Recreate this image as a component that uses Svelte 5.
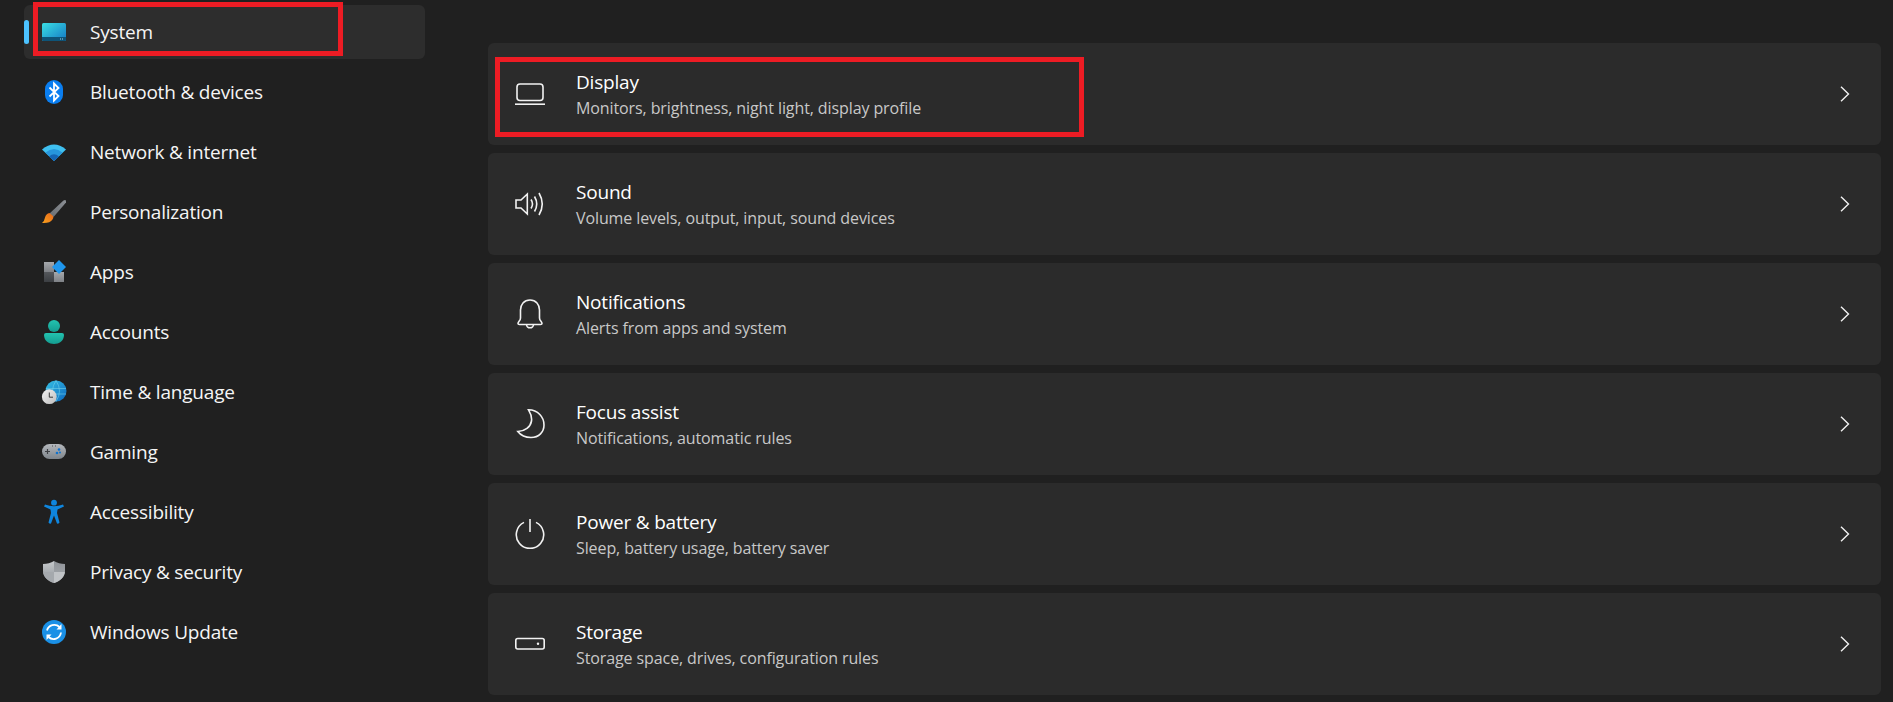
<script>
  const nav = [
    { icon: 'system', label: 'System', active: true },
    { icon: 'bluetooth', label: 'Bluetooth & devices' },
    { icon: 'network', label: 'Network & internet' },
    { icon: 'brush', label: 'Personalization' },
    { icon: 'apps', label: 'Apps' },
    { icon: 'accounts', label: 'Accounts' },
    { icon: 'time', label: 'Time & language' },
    { icon: 'gaming', label: 'Gaming' },
    { icon: 'access', label: 'Accessibility' },
    { icon: 'privacy', label: 'Privacy & security' },
    { icon: 'update', label: 'Windows Update' }
  ];

  const cards = [
    { icon: 'display', title: 'Display', sub: 'Monitors, brightness, night light, display profile', marked: true },
    { icon: 'sound', title: 'Sound', sub: 'Volume levels, output, input, sound devices' },
    { icon: 'bell', title: 'Notifications', sub: 'Alerts from apps and system' },
    { icon: 'moon', title: 'Focus assist', sub: 'Notifications, automatic rules' },
    { icon: 'power', title: 'Power & battery', sub: 'Sleep, battery usage, battery saver' },
    { icon: 'storage', title: 'Storage', sub: 'Storage space, drives, configuration rules' }
  ];
</script>

<div class="page">
  <svg class="defs" width="0" height="0">
    <defs>
      <linearGradient id="g-system" x1="0" y1="0" x2="1" y2="1">
        <stop offset="0" stop-color="#3adfe4" />
        <stop offset="1" stop-color="#1478c4" />
      </linearGradient>
      <linearGradient id="g-handle" x1="1" y1="0" x2="0" y2="1">
        <stop offset="0" stop-color="#8b8f94" />
        <stop offset="1" stop-color="#6a6e73" />
      </linearGradient>
      <linearGradient id="g-tip" x1="0" y1="1" x2="1" y2="0">
        <stop offset="0" stop-color="#f9a21c" />
        <stop offset="1" stop-color="#e8681c" />
      </linearGradient>
      <linearGradient id="g-account" x1="0" y1="0" x2="0" y2="1">
        <stop offset="0" stop-color="#23c3b0" />
        <stop offset="1" stop-color="#149c90" />
      </linearGradient>
      <linearGradient id="g-globe" x1="0" y1="0" x2="1" y2="1">
        <stop offset="0" stop-color="#36c0e4" />
        <stop offset="1" stop-color="#0c68c0" />
      </linearGradient>
      <linearGradient id="g-clock" x1="0" y1="0" x2="1" y2="1">
        <stop offset="0" stop-color="#f2f2f2" />
        <stop offset="1" stop-color="#bdbdbd" />
      </linearGradient>
      <linearGradient id="g-pad" x1="0" y1="0" x2="0" y2="1">
        <stop offset="0" stop-color="#b4b8bd" />
        <stop offset="1" stop-color="#7f858b" />
      </linearGradient>
      <linearGradient id="g-shield-l" x1="0" y1="0" x2="0" y2="1">
        <stop offset="0" stop-color="#c6c9cc" />
        <stop offset="1" stop-color="#8e9297" />
      </linearGradient>
      <linearGradient id="g-shield-r" x1="0" y1="0" x2="0" y2="1">
        <stop offset="0" stop-color="#8f9398" />
        <stop offset="1" stop-color="#a9adb1" />
      </linearGradient>
      <linearGradient id="g-apps" x1="0" y1="0" x2="0" y2="1">
        <stop offset="0" stop-color="#a5a8ac" />
        <stop offset="1" stop-color="#7e8186" />
      </linearGradient>
      <linearGradient id="g-apps-dark" x1="0" y1="0" x2="0" y2="1">
        <stop offset="0" stop-color="#55585c" />
        <stop offset="1" stop-color="#3c3f43" />
      </linearGradient>
    </defs>
  </svg>

  <nav class="sidebar">
    {#each nav as item}
      <div class="nav-item" class:active={item.active}>
        {#if item.active}
          <span class="indicator"></span>
          <span class="mark mark-nav"></span>
        {/if}
        <svg class="nav-icon" viewBox="0 0 30 30" width="30" height="30">
          {#if item.icon === 'system'}
            <rect x="3" y="6" width="24" height="18" rx="1.5" fill="url(#g-system)" />
            <path d="M3 20h24v2.5a1.5 1.5 0 0 1-1.5 1.5h-21A1.5 1.5 0 0 1 3 22.5z" fill="#0e5478" />
            <rect x="21" y="21.5" width="1" height="1" fill="#9fd4e8" />
            <rect x="23" y="21.5" width="1" height="1" fill="#9fd4e8" />
          {:else if item.icon === 'bluetooth'}
            <rect x="6" y="3" width="18" height="24" rx="9" fill="#0a7ef0" />
            <path d="M10.5 10.5 19.5 19 15 23.5V6.5L19.5 11 10.5 19.5" fill="none" stroke="#fff" stroke-width="1.8" />
          {:else if item.icon === 'network'}
            <path d="M3 12.5Q15 2.5 27 12.5L15 24Z" fill="#3fc0f0" />
            <path d="M6.5 15.5Q15 8.5 23.5 15.5L15 24Z" fill="#2796dc" />
            <path d="M10 19.5Q15 15 20 19.5L15 24Z" fill="#1565b4" />
          {:else if item.icon === 'brush'}
            <path d="M24.5 3.5Q27.5 2 27 5.5L14.5 20 10.5 16.5Z" fill="url(#g-handle)" />
            <path d="M10.5 16Q7 16.5 6 20.5 5.5 24 3 26 11 26.5 13.5 22.5 15 20.5 14 19Z" fill="url(#g-tip)" />
          {:else if item.icon === 'apps'}
            <rect x="5" y="5" width="10" height="10" fill="url(#g-apps)" />
            <rect x="5" y="15" width="10" height="10" fill="url(#g-apps-dark)" />
            <rect x="15" y="15" width="10" height="10" fill="url(#g-apps)" />
            <path d="M20 3l7 7-7 7-7-7z" fill="#1f97ee" />
          {:else if item.icon === 'accounts'}
            <circle cx="15" cy="9" r="6" fill="url(#g-account)" />
            <path d="M5 18a2 2 0 0 1 2-2h16a2 2 0 0 1 2 2c0 6-5 9-10 9S5 24 5 18z" fill="url(#g-account)" />
          {:else if item.icon === 'time'}
            <circle cx="17" cy="14" r="10.5" fill="url(#g-globe)" />
            <path d="M6.8 11.5H27M7 17H27M17 3.5Q10 14 17 24.500M17 3.500Q24 14 17 24.500" fill="none" stroke="#6fd0ea" stroke-width="0.6" />
            <circle cx="10.300" cy="19.700" r="7.400" fill="url(#g-clock)" />
            <path d="M10.300 15.500V20.200H14" fill="none" stroke="#3a3a3a" stroke-width="1" />
          {:else if item.icon === 'gaming'}
            <rect x="3" y="7" width="24" height="15" rx="7.500" fill="url(#g-pad)" />
            <path d="M6 14.500H11M8.500 12V17" stroke="#3d4044" stroke-width="1.200" />
            <circle cx="20" cy="12.500" r="1.300" fill="#1172cc" />
            <circle cx="18" cy="16" r="1.300" fill="#1172cc" />
            <circle cx="21" cy="15.500" r="1" fill="#1172cc" />
            <rect x="13" y="8.500" width="1" height="1" fill="#4a4d51" />
            <rect x="16" y="8.500" width="1" height="1" fill="#4a4d51" />
          {:else if item.icon === 'access'}
            <circle cx="15" cy="5.700" r="2.900" fill="#0f86de" />
            <path d="M5 9.500 6 7.500Q15 11 24 7.500L25 9.500 18.500 12.500 18 16 20.500 25.500Q20 27 18 26.500L15 18.500 12 26.500Q10 27 9.500 25.500L12 16 11.500 12.500Z" fill="#0f86de" />
          {:else if item.icon === 'privacy'}
            <path d="M15 4C12 6 8 7 4 7V14C4 20 9 24 15 26Z" fill="url(#g-shield-l)" />
            <path d="M15 4C18 6 22 7 26 7V14C26 20 21 24 15 26Z" fill="url(#g-shield-r)" />
            <path d="M15 15H4.100C4.700 20 9 24 15 26Z" fill="#a5a9ad" />
            <path d="M15 15H25.900C25.300 20 21 24 15 26Z" fill="#c0c3c6" />
          {:else if item.icon === 'update'}
            <circle cx="15" cy="15" r="12" fill="#1a90e6" />
            <path d="M8 13.500A7.500 7.500 0 0 1 20.500 10" fill="none" stroke="#fff" stroke-width="1.800" />
            <path d="M22 15.500A7.500 7.500 0 0 1 9.500 20" fill="none" stroke="#fff" stroke-width="1.800" />
            <path d="M22.500 7V12.500H17.500Z" fill="#fff" />
            <path d="M7.500 23V17.500H12.500Z" fill="#fff" />
          {/if}
        </svg>
        <span class="nav-label">{item.label}</span>
      </div>
    {/each}
  </nav>

  <main class="content">
    {#each cards as card}
      <div class="card">
        {#if card.marked}
          <span class="mark mark-card"></span>
        {/if}
        <svg class="card-icon" viewBox="0 0 30 30" width="30" height="30" fill="none" stroke="#f2f2f2" stroke-width="1.600">
          {#if card.icon === 'display'}
            <rect x="2" y="5" width="26" height="16.500" rx="3" />
            <path d="M0 25.200H30" />
          {:else if card.icon === 'sound'}
            <path d="M1 11H6L12.300 5V25L6 19H1Z" />
            <path d="M16 10.500Q19 15 16 19.500M19.500 7.500Q24 15 19.500 22.500M24 4Q30.500 15 24 26" />
          {:else if card.icon === 'bell'}
            <path d="M15 1C9 1 5.500 5.500 5.500 11V19C5.500 22 3 22.500 3 24.500Q3 25.500 4.500 25.500H25.500Q27 25.500 27 24.500C27 22.500 24.500 22 24.500 19V11C24.500 5.500 21 1 15 1Z" />
            <path d="M11.500 25.500A3.500 3.300 0 0 0 18.500 25.500" />
          {:else if card.icon === 'moon'}
            <path d="M13.500 .8C23 1 29 8 29 16 29 23 24 28.500 16 28.500 10 28.500 5.500 26 2.800 22.500 10 22 15.500 18 16.500 12 17 8 15.500 4 13.500 .8Z" />
          {:else if card.icon === 'power'}
            <path d="M15 0V13M9 3.400A13.700 13.700 0 1 0 21 3.400" />
          {:else if card.icon === 'storage'}
            <rect x=".8" y="9.500" width="28.400" height="10.500" rx="2" />
            <circle cx="23" cy="14.700" r="1.200" fill="#f2f2f2" stroke="none" />
          {/if}
        </svg>
        <div class="card-text">
          <div class="card-title">{card.title}</div>
          <div class="card-sub">{card.sub}</div>
        </div>
        <svg class="chevron" viewBox="0 0 10 16" width="10" height="16" fill="none" stroke="#f2f2f2" stroke-width="1.400">
          <path d="M1 .8 8.500 8 1 15.200" />
        </svg>
      </div>
    {/each}
  </main>
</div>

<style>
  :global(body) {
    background: #202020;
  }
  .page {
    display: flex;
    width: 1893px;
    height: 702px;
    overflow: hidden;
    background: #202020;
    color: #fff;
    font-family: 'Open Sans', 'Noto Sans', sans-serif;
  }
  .defs {
    position: absolute;
  }
  .sidebar {
    flex: 0 0 488px;
    display: flex;
    flex-direction: column;
    gap: 6px;
    box-sizing: border-box;
    padding: 5px 63px 0 24px;
  }
  .nav-item {
    position: relative;
    display: flex;
    align-items: center;
    gap: 21px;
    height: 54px;
    padding-left: 15px;
    border-radius: 6px;
  }
  .nav-item.active {
    background: #2d2d2d;
  }
  .indicator {
    position: absolute;
    left: 0;
    top: 15px;
    width: 5px;
    height: 24px;
    border-radius: 3px;
    background: #4cc2ff;
  }
  .nav-label {
    font-size: 19px;
    letter-spacing: -0.2px;
    color: #f5f5f5;
  }
  .mark {
    position: absolute;
    box-sizing: border-box;
    border: 5px solid #ed1c24;
  }
  .mark-nav {
    left: 9px;
    top: -3px;
    width: 310px;
    height: 54px;
  }
  .content {
    flex: 1;
    display: flex;
    flex-direction: column;
    gap: 8px;
    padding: 43px 12px 0 0;
  }
  .card {
    position: relative;
    display: flex;
    align-items: center;
    height: 102px;
    flex: none;
    box-sizing: border-box;
    padding: 0 31px 0 27px;
    border-radius: 6px;
    background: #2b2b2b;
  }
  .mark-card {
    left: 7px;
    top: 14px;
    width: 589px;
    height: 80px;
  }
  .card-text {
    flex: 1;
    margin-left: 31px;
    display: flex;
    flex-direction: column;
    gap: 2px;
  }
  .card-title {
    font-size: 19px;
    line-height: 26px;
    letter-spacing: -0.2px;
    color: #fff;
  }
  .card-sub {
    font-size: 16px;
    line-height: 22px;
    letter-spacing: -0.1px;
    color: #c8c8c8;
  }
</style>
